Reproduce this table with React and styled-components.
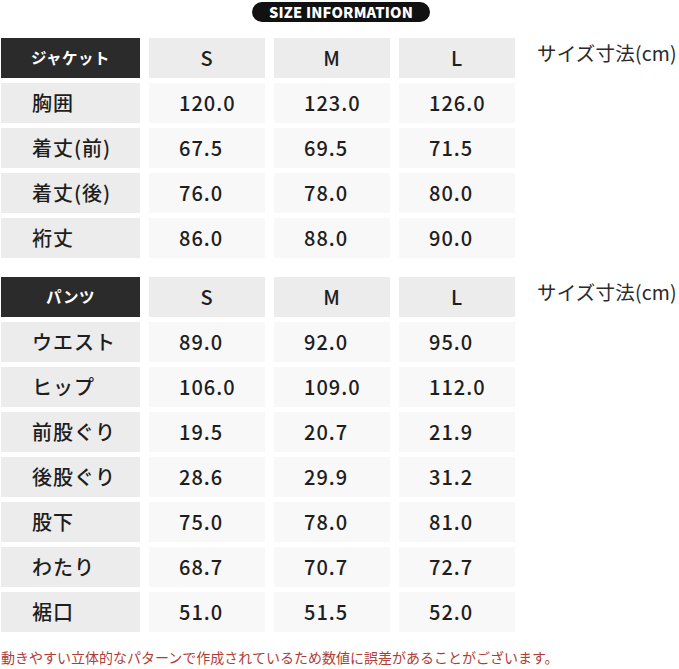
import React from "react";
import styled, { createGlobalStyle } from "styled-components";

const Global = createGlobalStyle`
  html, body { margin: 0; padding: 0; background: #fff; }
  body { font-family: "Noto Sans CJK JP", "Noto Sans", sans-serif; color: #1e1e1e; }
`;

const Page = styled.div`
  width: 679px;
  height: 669px;
  display: flex;
  flex-direction: column;
  overflow: hidden;
`;

const TitleRow = styled.div`
  display: flex;
  justify-content: center;
  padding-top: 2px;
  padding-left: 3px;
`;

const Pill = styled.div`
  width: 178px;
  height: 20px;
  border-radius: 10px;
  background: #111;
  color: #fff;
  font-family: "Noto Sans CJK JP", "Noto Sans", sans-serif;
  font-weight: 900;
  font-size: 14.6px;
  letter-spacing: 0.2px;
  display: flex;
  align-items: center;
  justify-content: center;
  line-height: 1;
`;

const Section = styled.div`
  display: flex;
  align-items: flex-start;
  margin-top: ${(p) => p.$top}px;
  padding-left: 1px;
`;

const Grid = styled.div`
  display: grid;
  grid-template-columns: 139px 116px 116px 116px;
  column-gap: 9px;
  row-gap: 5px;
`;

const Cell = styled.div`
  height: 40px;
  display: flex;
  align-items: center;
  font-size: 20px;
  letter-spacing: 1px;
  line-height: 1;
`;

const HeadCell = styled(Cell)`
  background: #2b2b2b;
  color: #fff;
  font-weight: 700;
  font-size: 15.5px;
  justify-content: center;
  letter-spacing: 0.5px;
`;

const SizeCell = styled(Cell)`
  background: #ececec;
  justify-content: center;
  font-weight: 500;
  font-size: 20px;
`;

const LabelCell = styled(Cell)`
  background: #ececec;
  padding-left: 31px;
  font-weight: 500;
`;

const ValueCell = styled(Cell)`
  background: #f8f8f8;
  padding-left: 30px;
  font-weight: 500;
`;

const Note = styled.div`
  margin-left: 22px;
  margin-top: 1px;
  font-size: 19.5px;
  line-height: 28px;
  color: #2a2a2a;
  white-space: nowrap;
  letter-spacing: 0.2px;
`;

const Footer = styled.div`
  margin-top: 16px;
  font-size: 14px;
  line-height: 18px;
  color: #b03c36;
  white-space: nowrap;
  padding-left: 1px;
`;

const jacket = [
  ["胸囲", "120.0", "123.0", "126.0"],
  ["着丈(前)", "67.5", "69.5", "71.5"],
  ["着丈(後)", "76.0", "78.0", "80.0"],
  ["裄丈", "86.0", "88.0", "90.0"],
];

const pants = [
  ["ウエスト", "89.0", "92.0", "95.0"],
  ["ヒップ", "106.0", "109.0", "112.0"],
  ["前股ぐり", "19.5", "20.7", "21.9"],
  ["後股ぐり", "28.6", "29.9", "31.2"],
  ["股下", "75.0", "78.0", "81.0"],
  ["わたり", "68.7", "70.7", "72.7"],
  ["裾口", "51.0", "51.5", "52.0"],
];

function SizeTable({ title, rows, top }) {
  return (
    <Section $top={top}>
      <Grid>
        <HeadCell>{title}</HeadCell>
        <SizeCell>S</SizeCell>
        <SizeCell>M</SizeCell>
        <SizeCell>L</SizeCell>
        {rows.map((r) => (
          <React.Fragment key={r[0]}>
            <LabelCell>{r[0]}</LabelCell>
            <ValueCell>{r[1]}</ValueCell>
            <ValueCell>{r[2]}</ValueCell>
            <ValueCell>{r[3]}</ValueCell>
          </React.Fragment>
        ))}
      </Grid>
      <Note>サイズ寸法(cm)</Note>
    </Section>
  );
}

export default function App() {
  return (
    <Page>
      <Global />
      <TitleRow>
        <Pill>SIZE INFORMATION</Pill>
      </TitleRow>
      <SizeTable title="ジャケット" rows={jacket} top={16} />
      <SizeTable title="パンツ" rows={pants} top={19} />
      <Footer>動きやすい立体的なパターンで作成されているため数値に誤差があることがございます。</Footer>
    </Page>
  );
}
